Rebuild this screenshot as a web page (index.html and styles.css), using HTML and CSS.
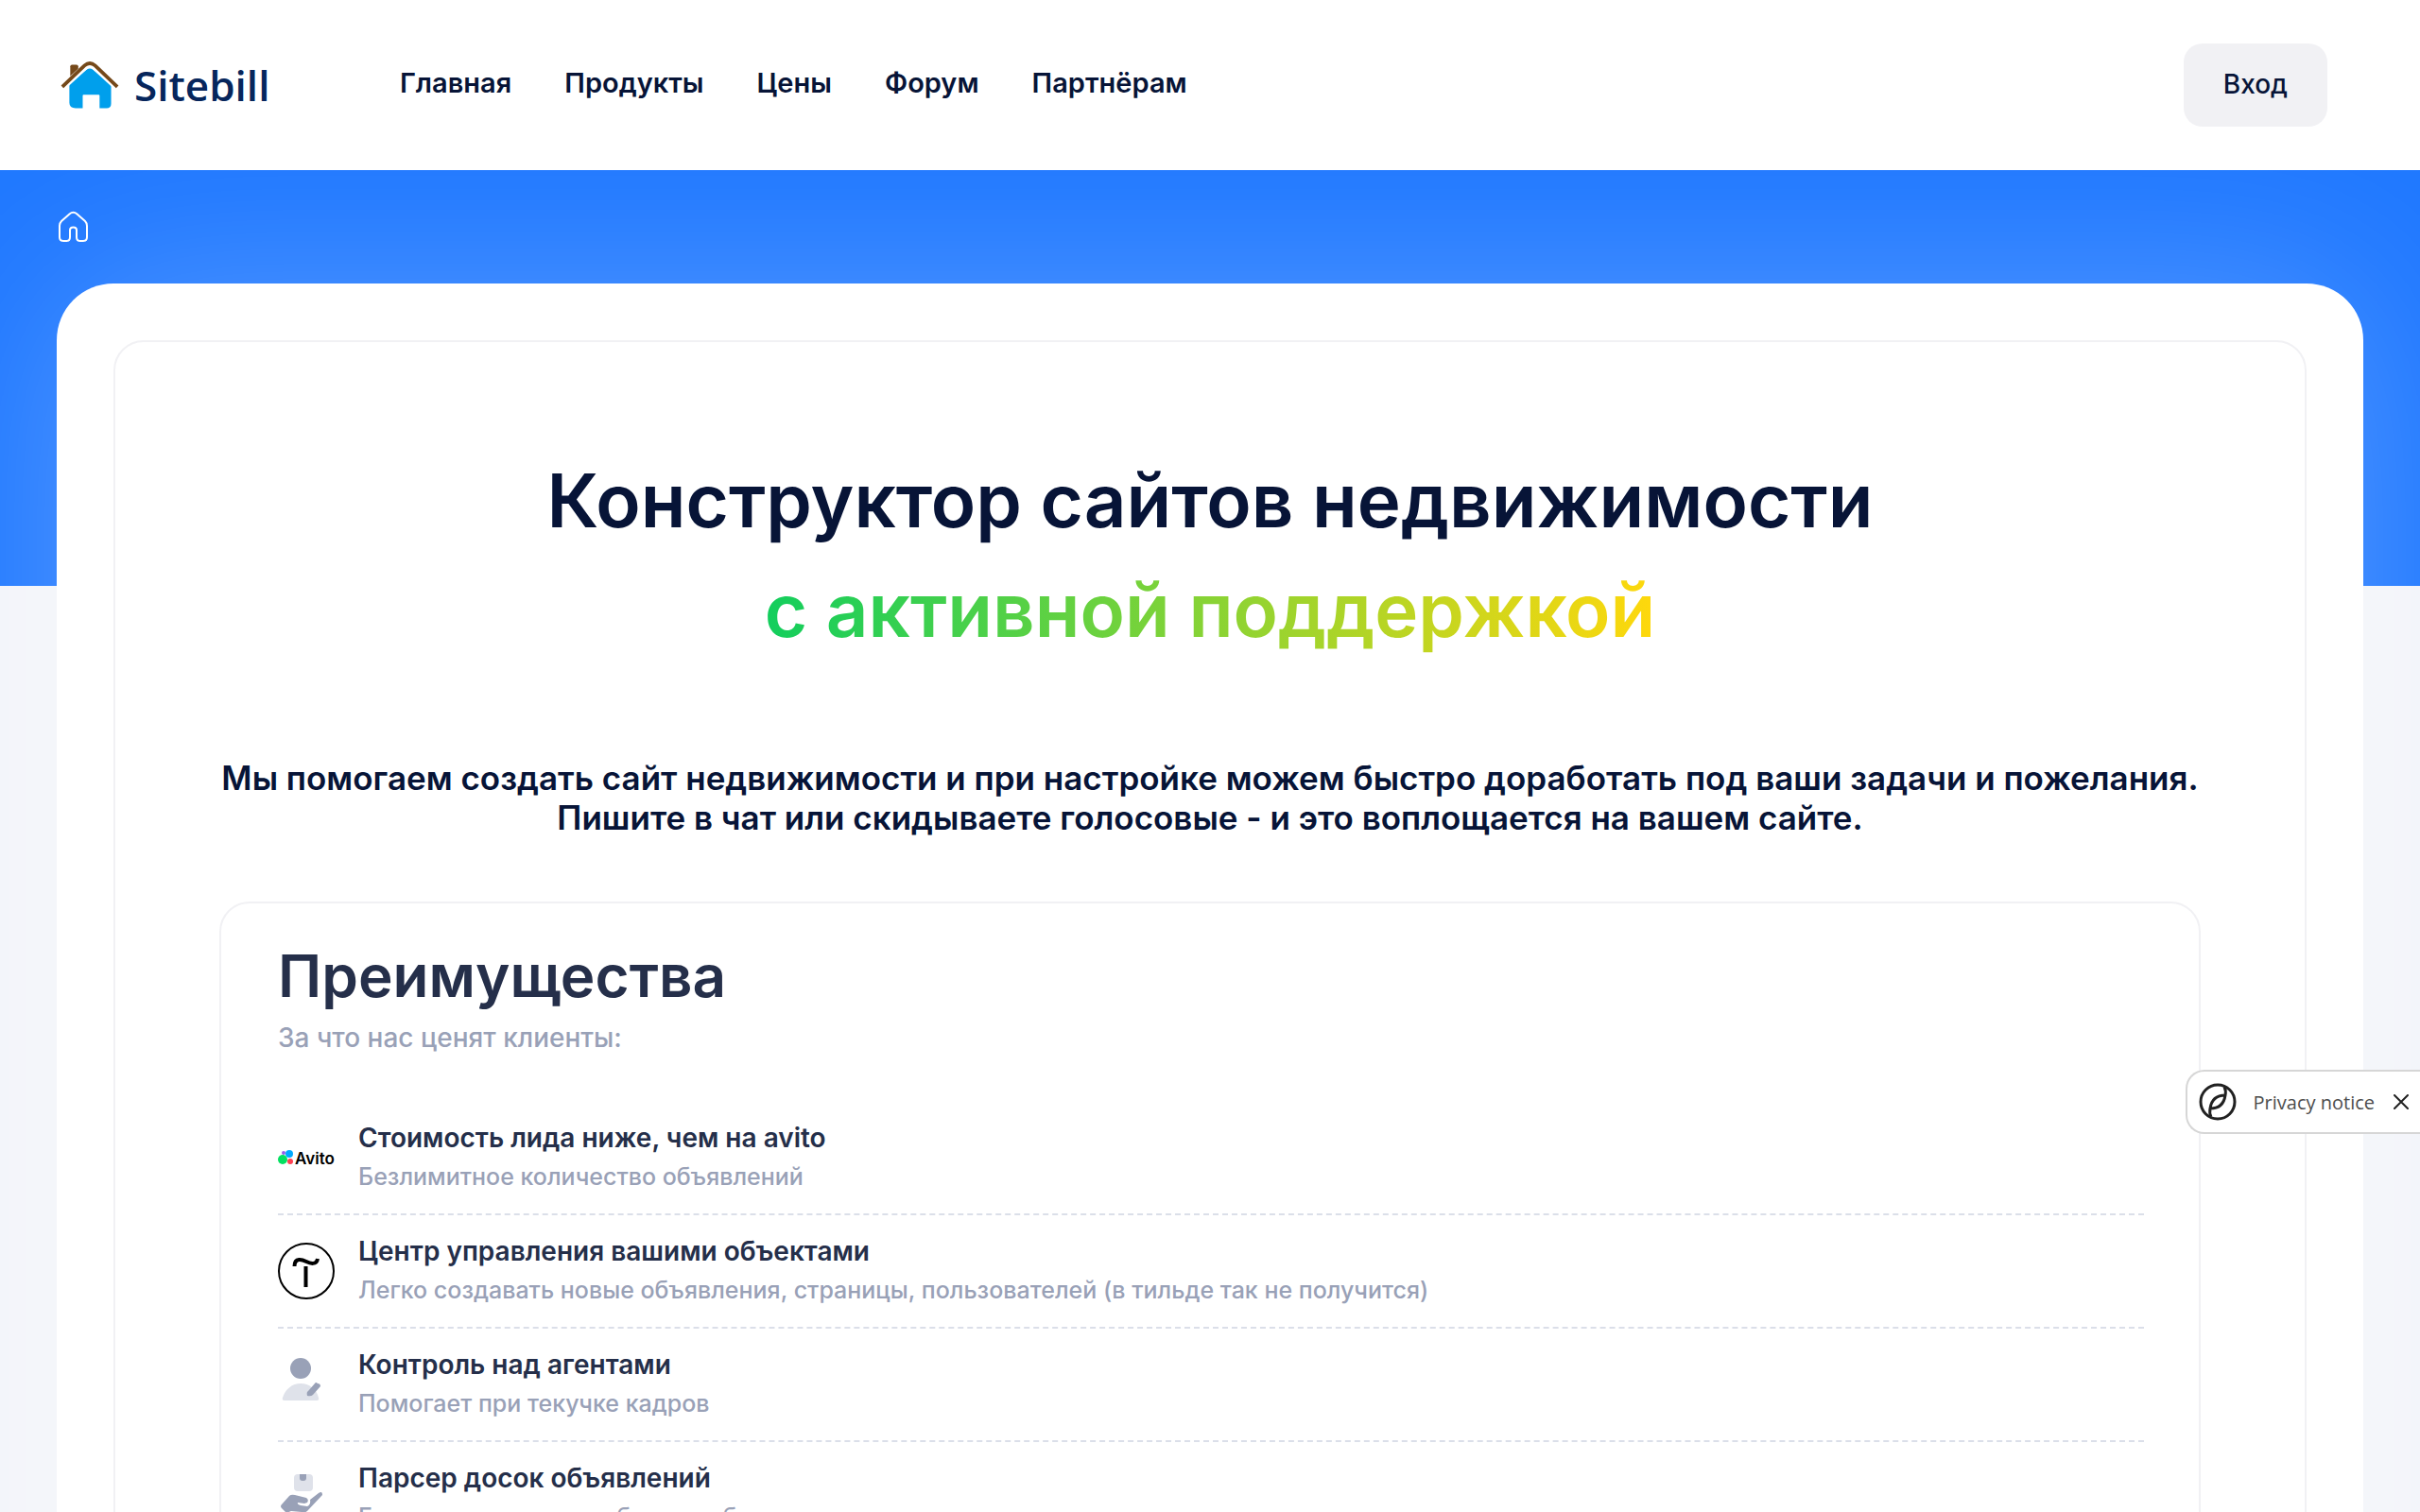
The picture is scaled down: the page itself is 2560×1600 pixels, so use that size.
FILE: index.html
```html
<!DOCTYPE html>
<html lang="ru">
<head>
<meta charset="utf-8">
<meta name="viewport" content="width=device-width, initial-scale=1">
<title>Sitebill</title>
<link rel="stylesheet" href="styles.css">
</head>
<body>
<header class="header">
  <a class="logo" href="#">
    <svg class="logo-mark" viewBox="0 0 66 52" aria-hidden="true">
      <path d="M11 20V5q0-2 2-2h5q2 0 2 2v8z" fill="#75491a"/>
      <path d="M10 25 29 9q4-3 8 0l20 17v21q0 5-5 5h-8V38q0-1-1-1H26q-1 0-1 1v14h-8q-7 0-7-6V25z" fill="#009fec"/>
      <path d="M2 29 27 6q6-6 12 0l25 23" fill="none" stroke="#fff" stroke-width="7"/>
      <path d="M2 28 27 4q6-5 12 0l25 24" fill="none" stroke="#75491a" stroke-width="4"/>
    </svg>
    <span class="logo-name">Sitebill</span>
  </a>
  <nav class="menu">
    <a href="#">Главная</a>
    <a href="#">Продукты</a>
    <a href="#">Цены</a>
    <a href="#">Форум</a>
    <a href="#">Партнёрам</a>
  </nav>
  <button class="login" type="button">Вход</button>
</header>
<main class="page">
  <nav class="crumbs">
    <a href="#" aria-label="Главная">
      <svg width="34" height="34" viewBox="0 0 34 34" fill="none" stroke="#fff" stroke-width="2" aria-hidden="true">
        <path d="M13.500 3.500Q17.500 0 21.500 3.500L30 11Q32 13 32 16V28Q32 32 28 32H24.500Q21 32 21 28V20.500Q21 17.500 17.500 17.500T14 20.500V28Q14 32 10.500 32H7Q3 32 3 28V16Q3 13 5 11Z"/>
      </svg>
    </a>
  </nav>
  <div class="sheet">
    <section class="panel">
      <h1 class="title">Конструктор сайтов недвижимости<br><span class="accent">с активной поддержкой</span></h1>
      <p class="lead">Мы помогаем создать сайт недвижимости и при настройке можем быстро доработать под ваши задачи и пожелания.<br>Пишите в чат или скидываете голосовые - и это воплощается на вашем сайте.</p>
      <section class="card">
        <h2 class="card-title">Преимущества</h2>
        <p class="card-sub">За что нас ценят клиенты:</p>
        <ul class="list">
          <li class="row">
            <svg class="icon" viewBox="0 0 60 60" aria-hidden="true">
              <circle cx="6" cy="25" r="2" fill="#965eeb"/><circle cx="12" cy="26" r="4" fill="#0af"/><circle cx="5" cy="32" r="5" fill="#04e061"/><circle cx="13" cy="34" r="3" fill="#ff4053"/>
              <text class="avito" x="18" y="37">Avito</text>
            </svg>
            <div class="row-text"><h3>Стоимость лида ниже, чем на avito</h3><p>Безлимитное количество объявлений</p></div>
          </li>
          <li class="row">
            <svg class="icon" viewBox="0 0 60 60" fill="none" stroke="#000" aria-hidden="true">
              <circle cx="30" cy="30" r="29" stroke-width="2"/>
              <path d="M17.500 25C17.500 15 26 18 30 20S41 24 42 17" stroke-width="4"/>
              <path d="M29.500 25V47" stroke-width="4"/>
            </svg>
            <div class="row-text"><h3>Центр управления вашими объектами</h3><p>Легко создавать новые объявления, страницы, пользователей (в тильде так не получится)</p></div>
          </li>
          <li class="row">
            <svg class="icon" viewBox="0 4 60 60" aria-hidden="true">
              <circle cx="24" cy="17" r="11" fill="#99a1b7"/>
              <path d="M7 51Q4 51 5 48C8 39 15 33 24 33S41 39 43 48Q44 51 41 51Z" fill="#dfe2ea"/>
              <path d="M42 33Q45 33 45 36L37 45Q35 47 31 46Q30 42 32 41L39 33Q40 31 42 33Z" fill="#99a1b7"/>
            </svg>
            <div class="row-text"><h3>Контроль над агентами</h3><p>Помогает при текучке кадров</p></div>
          </li>
          <li class="row">
            <svg class="icon" viewBox="0 4 60 60" aria-hidden="true">
              <rect x="17" y="9" width="20" height="18" rx="4" fill="#dfe2ea"/>
              <path d="M23 9h7v4q0 3-3 3h-1q-3 0-3-3z" fill="#99a1b7"/>
              <path d="M4 41 12 32Q14 30 18 31L30 34Q33 36 31 39L28 40 21 39Q20 41 24 42L31 43Q35 41 34 36L43 29Q47 26 47 31L31 48Q29 50 25 49L14 48 9 50 4 45Q2 43 4 41Z" fill="#99a1b7"/>
            </svg>
            <div class="row-text"><h3>Парсер досок объявлений</h3><p>Готовая интеграция с базами объектов</p></div>
          </li>
        </ul>
      </section>
    </section>
  </div>
</main>
<aside class="privacy">
  <a class="privacy-link" href="#">
    <svg width="40" height="40" viewBox="0 0 40 40" fill="none" stroke="#212121" stroke-width="3" aria-hidden="true">
      <circle cx="20" cy="20" r="18"/>
      <path d="M27 4Q29 8 28 13Q14 13 12 27Q26 27 28 13M12 27Q11 32 13 36"/>
    </svg>
    <span>Privacy notice</span>
  </a>
  <button class="close" type="button" aria-label="Close">
    <svg width="16" height="16" viewBox="0 0 16 16" stroke="#212121" stroke-width="2" stroke-linecap="round" aria-hidden="true"><path d="M1 1 15 15M15 1 1 15"/></svg>
  </button>
</aside>
</body>
</html>
```
FILE: styles.css
```css
* { box-sizing: border-box; }

body {
  margin: 0;
  height: 100vh;
  overflow: hidden;
  background: #f3f5fa;
  color: #071437;
  font-family: Inter, sans-serif;
  -webkit-font-smoothing: antialiased;
}

h1, h2, h3, p, ul { margin: 0; padding: 0; }
ul { list-style: none; }
a { color: inherit; text-decoration: none; }
button { border: 0; cursor: pointer; font-family: inherit; }
svg { display: block; flex: none; }

/* Header */
.header {
  display: flex;
  align-items: center;
  height: 180px;
  padding: 0 98px 0 64px;
  background: #fff;
}
.logo { display: flex; align-items: center; gap: 16px; width: 359px; }
.logo-mark { width: 62px; height: 50px; }
.logo-name {
  color: #06265c;
  font-family: "Open Sans", sans-serif;
  font-size: 44px;
  line-height: 52px;
  font-weight: 600;
}
.menu {
  display: flex;
  gap: 56px;
  flex: 1;
  padding-bottom: 4px;
  font-size: 29px;
  line-height: 42px;
  font-weight: 600;
}
.login {
  padding: 21px 42px 23px;
  border-radius: 20px;
  background: #f1f1f4;
  color: #071437;
  font-size: 28px;
  line-height: 44px;
  font-weight: 500;
}

/* Blue backdrop behind the top of the sheet */
.page {
  overflow: hidden;
  padding: 0 60px;
  background: linear-gradient(#1f78ff, #1f78ff) 0 0 / 100% 440px no-repeat;
}
.crumbs { display: flex; align-items: center; height: 120px; }
.sheet {
  padding: 60px;
  border-radius: 60px;
  background: #fff;
  box-shadow: 0 0 200px rgba(255, 255, 255, 0.25);
}

.panel {
  padding: 110px;
  border: 2px solid #f1f1f4;
  border-radius: 32px;
}
.title {
  font-size: 78px;
  line-height: 116px;
  font-weight: 600;
  text-align: center;
}
.accent {
  background: linear-gradient(to right, #12ce5d 0%, #ffd80c 100%);
  -webkit-background-clip: text;
  background-clip: text;
  color: transparent;
}
.lead {
  margin: 98px 0 68px;
  font-size: 35px;
  line-height: 42px;
  font-weight: 600;
  text-align: center;
}

/* Benefits card */
.card {
  padding: 34px 58px 34px 60px;
  border: 2px solid #f1f1f4;
  border-radius: 32px;
  color: #252f4a;
}
.card-title {
  font-size: 62px;
  line-height: 86px;
  font-weight: 600;
}
.card-sub {
  color: #99a1b7;
  font-size: 28px;
  line-height: 44px;
  font-weight: 500;
}
.list { margin-top: 46px; }
.row {
  display: flex;
  align-items: center;
  gap: 25px;
  height: 120px;
  border-bottom: 2px dashed #dbdfe9;
}
.icon { width: 60px; height: 60px; }
.row-text { padding-bottom: 2px; }
.row h3 { font-size: 28px; line-height: 42px; font-weight: 600; }
.row p { color: #99a1b7; font-size: 25px; line-height: 40px; font-weight: 500; }
.avito { font-size: 17px; font-weight: 600; }

/* Privacy tab pinned to the window edge */
.privacy {
  position: fixed;
  right: 0;
  top: 1132px;
  display: flex;
  align-items: center;
  gap: 20px;
  height: 68px;
  padding: 0 12px;
  border: 2px solid #d6d6d6;
  border-right: 0;
  border-radius: 20px 0 0 20px;
  background: #fff;
}
.privacy-link {
  display: flex;
  align-items: center;
  gap: 18px;
  color: #4d4d4d;
  font-family: "Open Sans", sans-serif;
  font-size: 20px;
}
.close { padding: 0; background: none; }
```
